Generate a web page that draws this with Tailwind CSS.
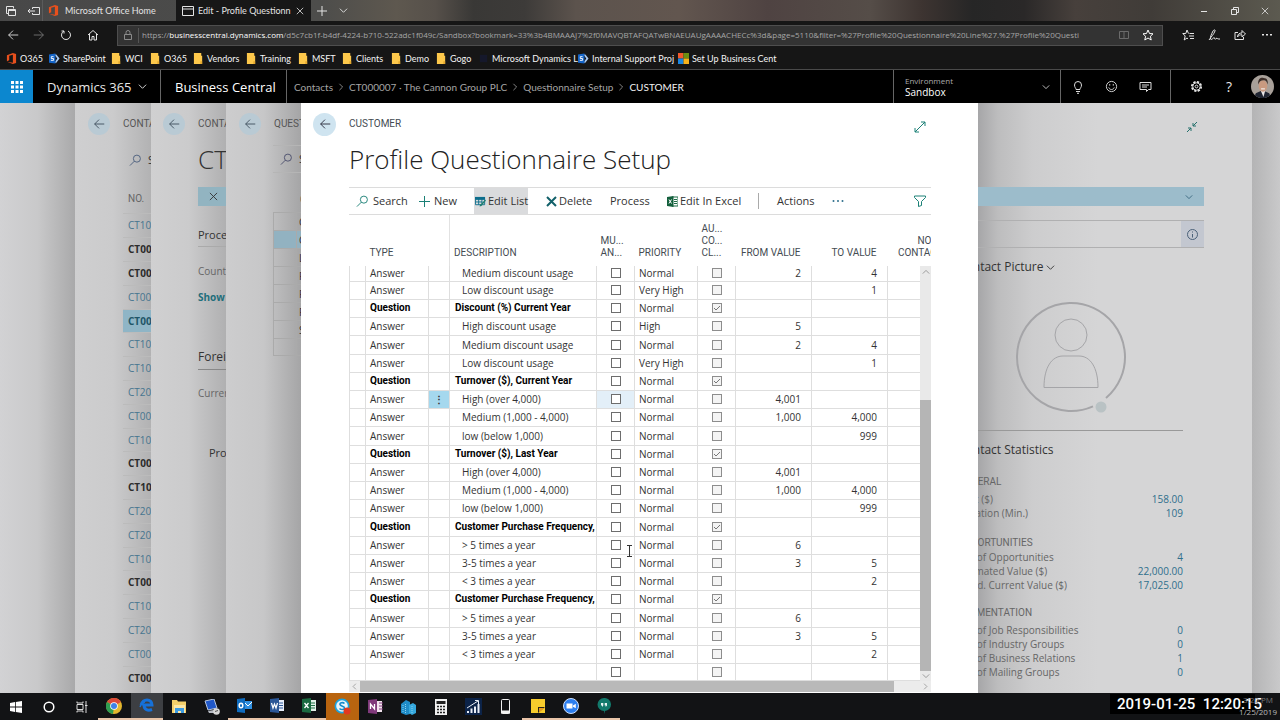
<!DOCTYPE html>
<html lang="en">
<head>
<meta charset="utf-8">
<meta name="viewport" content="width=device-width, initial-scale=1">
<title>Edit - Profile Questionnaire Setup</title>
<script src="https://cdn.jsdelivr.net/npm/@tailwindcss/browser@4"></script>
</head>
<body class="bg-black font-['Open_Sans','Noto_Sans',sans-serif] text-[10px] leading-[14px] text-[#333]">
<svg class="hidden" aria-hidden="true">
  <symbol id="back" viewBox="0 0 16 16"><path d="M14 8H3M8 3L3 8l5 5" fill="none" stroke="currentColor"/></symbol>
  <symbol id="down" viewBox="0 0 10 10"><path d="M1 3l4 4 4-4" fill="none" stroke="currentColor"/></symbol>
  <symbol id="right" viewBox="0 0 10 10"><path d="M3 1l4 4-4 4" fill="none" stroke="currentColor"/></symbol>
  <symbol id="search" viewBox="0 0 14 14"><circle cx="8.500" cy="5" r="3.800" fill="none" stroke="currentColor"/><path d="M5.800 7.700L1 12.500" fill="none" stroke="currentColor"/></symbol>
  <symbol id="cross" viewBox="0 0 10 10"><path d="M1 1l8 8M9 1L1 9" fill="none" stroke="currentColor"/></symbol>
  <symbol id="folder" viewBox="0 0 10 12"><path d="M0 0h8v3h1v9H0z" fill="#fdc84b"/><path d="M7 9h2v3H7z" fill="#e5a82e"/></symbol>
  <symbol id="office" viewBox="0 0 12 12"><path d="M1 2.500L7.500 0 11 1v10l-3.500 1L1 9.500l6.500 1V2L3.500 3v5L1 9z" fill="#e8501d"/></symbol>
  <symbol id="sharepoint" viewBox="0 0 12 12"><path d="M6 1.500h2L11.500 6 8 10.500H6l3-4.500z" fill="#a9c9f2"/><path d="M0 1.500L7 .5v11l-7-1z" fill="#1565c8"/><path d="M5 4H2.500v2H5v2H2" fill="none" stroke="#fff"/></symbol>
  <symbol id="ms" viewBox="0 0 12 12"><path d="M0 0h6v6H0z" fill="#f0592b"/><path d="M6 0h6v6H6z" fill="#6b8e12"/><path d="M0 6h6v6H0z" fill="#1a86e0"/><path d="M6 6h6v6H6z" fill="#f6b21b"/></symbol>
  <symbol id="dyn" viewBox="0 0 12 12"><path d="M2 2h8v8H2z" fill="#15182b"/></symbol>
</svg>

<div class="flex min-h-screen flex-col overflow-hidden">
  <!-- browser tabs -->
  <div class="flex h-[21px] items-stretch bg-[linear-gradient(90deg,#484848_0%,#4d4d4b_25%,#5e584f_31%,#56504a_34%,#393836_37%,#3d3b39_41%,#5c534d_45%,#62564f_53%,#4f4342_60%,#554d48_68%,#3d3431_72%,#262626_76%,#2a2828_80%,#47403c_84%,#403c38_90%,#5c5a50_100%)] font-['Lato','Open_Sans',sans-serif] text-[9px] text-[#e4e4e4]">
    <div class="flex w-[43px] items-center gap-3 border-r border-[#5b5b5b] pl-[6px]">
      <button aria-label="Tabs set aside"><svg class="size-[10px]" viewBox="0 0 10 10" fill="none" stroke="currentColor"><path d="M2.500 7.500h-2v-7h7v2"/><path d="M2.500 3.500h7v6h-7z"/><path d="M2.500 4.500h7"/></svg></button>
      <button aria-label="Set these tabs aside"><svg class="h-[10px] w-[12px]" viewBox="0 0 12 10" fill="none" stroke="currentColor"><path d="M4.500 3V1.500h7v7h-7V7M0 5h7M2 3L0 5l2 2"/></svg></button>
    </div>
    <button class="flex w-[133px] items-center gap-[6px] pl-[5px] text-left"><svg class="size-[11px] shrink-0"><use href="#office"/></svg><span class="whitespace-nowrap">Microsoft Office Home</span></button>
    <div class="flex w-[135px] items-center bg-[#171717] pl-[6px]">
      <button class="flex min-w-0 flex-1 items-center gap-[4px]"><svg class="h-[10px] w-[12px] shrink-0" viewBox="0 0 12 10" fill="none" stroke="currentColor"><path d="M.5.5h11v9H.5zM.5 3h11"/></svg><span class="whitespace-nowrap">Edit - Profile Questionn</span></button>
      <button class="flex w-[22px] justify-center" aria-label="Close tab"><svg class="size-2"><use href="#cross"/></svg></button>
    </div>
    <button class="flex w-[22px] items-center justify-center" aria-label="New tab"><svg class="size-[10px]" viewBox="0 0 10 10" stroke="currentColor"><path d="M5 0v10M0 5h10"/></svg></button>
    <button class="flex w-[20px] items-center justify-center" aria-label="Tab previews"><svg class="size-[9px]"><use href="#down"/></svg></button>
    <div class="ml-auto flex items-center">
      <button class="flex w-[30px] justify-center" aria-label="Minimize"><svg class="size-2" viewBox="0 0 8 8" stroke="currentColor"><path d="M1 4.500h6"/></svg></button>
      <button class="flex w-[31px] justify-center" aria-label="Restore"><svg class="size-2" viewBox="0 0 8 8" fill="none" stroke="currentColor"><path d="M.5 2.500h5v5h-5zM2.500 2.500v-2h5v5h-2"/></svg></button>
      <button class="flex w-[30px] justify-center" aria-label="Close"><svg class="size-2"><use href="#cross"/></svg></button>
    </div>
  </div>

  <!-- address bar -->
  <div class="flex h-[27px] items-center bg-[#161616] pt-[1px] text-[#e4e4e4]">
    <button class="flex w-[26px] justify-center" aria-label="Back"><svg class="size-[14px]"><use href="#back"/></svg></button>
    <button class="flex w-[26px] rotate-180 justify-center text-[#777]" aria-label="Forward"><svg class="size-[14px]"><use href="#back"/></svg></button>
    <button class="flex w-[28px] justify-center" aria-label="Refresh"><svg class="size-3" viewBox="0 0 12 12" fill="none" stroke="currentColor"><path d="M4 2a4.500 4.500 0 1 0 4 0M4 2H1.500M4 2v2.500"/></svg></button>
    <button class="flex w-[26px] justify-center" aria-label="Home"><svg class="size-3" viewBox="0 0 12 12" fill="none" stroke="currentColor"><path d="M1 6l5-4.500L11 6M2.500 5v6h2.500V7.500h2V11h2.500V5"/></svg></button>
    <div class="ml-[11px] flex h-[21px] min-w-0 flex-1 items-center border border-[#4e4e4e] bg-[#333]">
      <svg class="ml-[6px] h-[10px] w-2 shrink-0 text-[#8b8b8b]" viewBox="0 0 8 10" fill="none" stroke="currentColor"><path d="M.5 4.500h7v5h-7zM2 4.500V2.500a2 2 0 0 1 4 0v2"/></svg>
      <div class="ml-[6px] h-[15px] border-l border-[#555]"></div>
      <div class="ml-[3px] min-w-0 flex-1 overflow-hidden text-[8px] whitespace-nowrap text-[#a6a6a6]">https://<span class="text-white">businesscentral.dynamics.com</span>/d5c7cb1f-b4df-4224-b710-522adc1f049c/Sandbox?bookmark=33%3b4BMAAAJ7%2f0MAVQBTAFQATwBNAEUAUgAAAACHECc%3d&amp;page=5110&amp;filter=%27Profile%20Questionnaire%20Line%27.%27Profile%20Questi</div>
      <button class="flex w-[22px] justify-center text-[#6b6b6b]" aria-label="Reading view"><svg class="size-[10px]" viewBox="0 0 10 10" fill="none" stroke="currentColor"><path d="M.5 1.500h9v7h-9zM5 1.500v7"/></svg></button>
      <button class="flex w-[27px] justify-center pr-[2px] text-white" aria-label="Add to favorites"><svg class="size-3" viewBox="0 0 12 12" fill="none" stroke="currentColor"><path d="M6 1l1.500 3.500 3.500.3-2.600 2.500.8 3.700L6 9l-3.200 2 .8-3.700L1 4.800l3.500-.3z"/></svg></button>
    </div>
    <div class="flex w-[117px] items-center pl-[11px]">
      <button class="flex w-[27px] justify-center" aria-label="Hub"><svg class="size-3" viewBox="0 0 12 12" fill="none" stroke="currentColor"><path d="M6.500 4.500L5 1 3.800 4.500H.8L3.200 7l-1 4L5 9l1 .8M7.500 4.500H12M7 7h5M8 9.500h4"/></svg></button>
      <button class="flex w-[26px] justify-center" aria-label="Notes"><svg class="size-3" viewBox="0 0 12 12" fill="none" stroke="currentColor"><path d="M1 11c2-3 5-6 6-9 .5-1.500-1-1.500-2 0-1.500 3-3 6-2.500 8 .5 1.500 3-1 3.500-1.500s0 2 1.500 1.500L9 9c.5 1 1 1 3 1"/></svg></button>
      <button class="flex w-[26px] justify-center" aria-label="Share"><svg class="size-3" viewBox="0 0 12 12" fill="none" stroke="currentColor"><path d="M4 3.500H1v7h8.500V8M3.500 8c0-3 2-4 4.500-4V1.500L11.500 5 8 8V5.800C6 5.800 4.500 6 3.500 8z"/></svg></button>
      <button class="flex w-[27px] justify-center" aria-label="More"><svg class="h-1 w-3" viewBox="0 0 12 4" fill="currentColor"><path d="M1 1h2v1.500H1zM5 1h2v1.500H5zM9 1h2v1.500H9z"/></svg></button>
    </div>
  </div>

  <nav id="bookmarks" class="flex h-[22px] items-center border-b border-[#4a4a4a] bg-[#161616] pl-[6px] font-['Lato','Open_Sans',sans-serif] text-[9px] text-[#f4f4f4]" aria-label="Favorites"></nav>

  <!-- application header -->
  <header class="flex h-[33px] items-stretch bg-black text-[#e8e8e8]">
    <button class="flex w-[33px] items-center justify-center bg-[#0c87cf] text-white" aria-label="App launcher"><svg class="size-3" viewBox="0 0 12 12" fill="currentColor"><path d="M0 0h3v3H0zM4.500 0h3v3h-3zM9 0h3v3H9zM0 4.500h3v3H0zM4.500 4.500h3v3h-3zM9 4.500h3v3H9zM0 9h3v3H0zM4.500 9h3v3h-3zM9 9h3v3H9z"/></svg></button>
    <button class="flex w-[128px] items-center gap-[6px] border-r border-[#666] pl-[14px] text-[13px]"><span class="whitespace-nowrap">Dynamics 365</span><svg class="size-[9px]"><use href="#down"/></svg></button>
    <a href="#" class="flex w-[126px] items-center border-r border-[#666] pl-[14px] text-[13px] whitespace-nowrap text-white">Business Central</a>
    <nav class="flex flex-1 items-center gap-[4px] pl-[7px] font-['Lato','Open_Sans',sans-serif] text-[10px] whitespace-nowrap text-[#a5a5a5]" aria-label="Breadcrumb">
      <a href="#">Contacts</a><svg class="size-[8px]"><use href="#right"/></svg>
      <a href="#">CT000007 · The Cannon Group PLC</a><svg class="size-[8px]"><use href="#right"/></svg>
      <a href="#">Questionnaire Setup</a><svg class="size-[8px]"><use href="#right"/></svg>
      <span class="text-[#f2f2f2]">CUSTOMER</span>
    </nav>
    <button class="flex w-[168px] items-center border-x border-[#666] pr-[10px] pl-[11px] text-left">
      <span class="flex-1"><span class="block text-[8px] leading-[11px] text-[#aaa]">Environment</span><span class="block text-[10px] leading-[12px] text-white">Sandbox</span></span>
      <svg class="size-2"><use href="#down"/></svg>
    </button>
    <div class="flex w-[110px] items-center border-r border-[#666] text-[#ddd]">
      <button class="flex w-[34px] justify-center" aria-label="Tell me"><svg class="size-[14px]" viewBox="0 0 14 14" fill="none" stroke="currentColor"><path d="M5 9.500C5 8 3.500 7.500 3.500 5a3.500 3.500 0 0 1 7 0c0 2.500-1.500 3-1.500 4.500zM5 11.500h4M6 13.300h2"/></svg></button>
      <button class="flex w-[33px] justify-center" aria-label="Feedback"><svg class="size-[13px]" viewBox="0 0 14 14" fill="none" stroke="currentColor"><circle cx="7" cy="7" r="5.500"/><path d="M4 8c1 3 5 3 6 0"/><path d="M5 4.500V6M9 4.500V6" stroke-width="1.300"/></svg></button>
      <button class="flex w-[34px] justify-center" aria-label="Messages"><svg class="h-3 w-[13px]" viewBox="0 0 13 12" fill="none" stroke="currentColor"><path d="M1 1.500h11v7H9.500l-2 2v-2H1z"/><path d="M3 4h7M3 6h5" /></svg></button>
    </div>
    <div class="flex w-[109px] items-center pl-[9px]">
      <button class="flex w-[32px] justify-center" aria-label="Settings"><svg class="size-[13px]" viewBox="0 0 14 14" fill="none" stroke="currentColor"><circle cx="7" cy="7" r="5" stroke-width="2" stroke-dasharray="2.400 1.500"/><circle cx="7" cy="7" r="4"/><circle cx="7" cy="7" r="1.500"/></svg></button>
      <button class="w-[34px] text-center text-[14px]" aria-label="Help">?</button>
      <button class="flex w-[32px] justify-center" aria-label="Account"><svg class="size-[23px]" viewBox="0 0 24 24"><clipPath id="av"><circle cx="12" cy="12" r="12"/></clipPath><g clip-path="url(#av)"><path d="M0 0h24v24H0z" fill="#a8a099"/><path d="M3 24l2-5 7-3 7 3 2 5z" fill="#202532"/><path d="M10 16h5l-2 7z" fill="#e9e6e6"/><ellipse cx="12.500" cy="11.500" rx="4.500" ry="6" fill="#c99a80"/><path d="M7.500 10C7 4 10 2.500 13 3c4 0 5 3 4.300 7-1-3.500-1.500-4.500-4.300-4.500S8.500 7 7.500 10z" fill="#3b2c26"/><path d="M10.500 14.500h4" stroke="#fff"/></g></svg></button>
    </div>
  </header>

  <!-- stacked pages -->
  <div class="flex flex-1 items-stretch bg-[#cfcfd0]">
    <div class="w-[75px] shrink-0 bg-linear-to-r from-[#d2d2d4] via-[#c9c9ca] to-[#a9a9aa]"></div>

    <aside class="w-[76px] shrink-0 overflow-hidden bg-linear-to-r from-[#cfcfd0] via-[#cbcbcc] to-[#b2b2b3] whitespace-nowrap" aria-label="Contacts">
      <div class="flex h-[42px] items-center gap-[13px] pl-[13px]"><button class="flex size-[22px] shrink-0 items-center justify-center rounded-full bg-[#b9cad4] text-[#3a4a58]" aria-label="Back"><svg class="size-[14px]"><use href="#back"/></svg></button><span class="font-['Roboto',sans-serif] text-[#555]">CONTACTS</span></div>
      <div class="flex h-[30px] items-center gap-[6px] pl-[54px] text-[11px]"><svg class="size-[13px] shrink-0 text-[#4c5f7d]"><use href="#search"/></svg>Search</div>
      <div class="flex h-[38px] items-end pb-[7px] pl-[53px] font-['Roboto',sans-serif] text-[#666]">NO.</div>
      <ul id="contacts" class="pl-[48px]"></ul>
    </aside>

    <aside class="w-[75px] shrink-0 overflow-hidden bg-linear-to-r from-[#d0d0d1] via-[#cbcbcc] to-[#b0b0b1] whitespace-nowrap" aria-label="Contact card">
      <div class="flex h-[42px] items-center gap-[13px] pl-[12px]"><button class="flex size-[22px] shrink-0 items-center justify-center rounded-full bg-[#b9cad4] text-[#3a4a58]" aria-label="Back"><svg class="size-[14px]"><use href="#back"/></svg></button><span class="font-['Roboto',sans-serif] text-[#555]">CONTACT CARD</span></div>
      <div class="pl-[47px]">
        <div class="flex h-[42px] items-start text-[26px] leading-[28px] font-light">CT000007</div>
        <div class="flex h-[19px] items-center gap-[9px] bg-[#92b4c1] pl-[11px]"><svg class="size-[9px] shrink-0"><use href="#cross"/></svg>Information</div>
        <div class="flex h-[41px] items-end border-b border-[#aaa] pb-[4px] text-[11px]">Process</div>
        <div class="flex h-[37px] items-end pb-[6px] text-[#666]">Country/Region</div>
        <a href="#" class="flex h-[26px] items-center font-bold text-[#1f6e7b]">Show more</a>
        <h2 class="flex h-[60px] items-end border-b border-[#888] pb-[5px] text-[12px]">Foreign Trade</h2>
        <div class="flex h-[46px] items-center text-[#666]">Currency Code</div>
        <div class="flex h-[74px] items-center pl-[11px] text-[11px]">Profile</div>
      </div>
    </aside>

    <aside class="w-[75px] shrink-0 overflow-hidden bg-linear-to-r from-[#cdcdce] via-[#c7c7c8] to-[#a5a5a6] whitespace-nowrap" aria-label="Questionnaire Setup">
      <div class="flex h-[42px] items-center gap-[13px] pl-[13px]"><button class="flex size-[22px] shrink-0 items-center justify-center rounded-full bg-[#b9cad4] text-[#3a4a58]" aria-label="Back"><svg class="size-[14px]"><use href="#back"/></svg></button><span class="font-['Roboto',sans-serif] text-[#555]">QUESTIONNAIRE</span></div>
      <div class="ml-[47px] flex h-[28px] items-center gap-[6px] border-y border-[#b5b5b5] pl-[7px] text-[11px]"><svg class="size-[13px] shrink-0 text-[#4c4f6d]"><use href="#search"/></svg>Search</div>
      <div class="h-[39px] pt-[20px] pl-[74px] font-['Roboto',sans-serif] text-[#555]">CODE</div>
      <ul id="setups" class="ml-[47px] border-l border-[#aaa]"></ul>
    </aside>

    <main class="min-w-0 flex-1 bg-white pr-[47px] pl-[12px]">
      <div class="flex h-[42px] items-center">
        <button class="flex size-[23px] shrink-0 items-center justify-center rounded-full bg-[#cfe4f0] text-[#223]" aria-label="Back"><svg class="size-[14px]"><use href="#back"/></svg></button>
        <span class="ml-[13px] flex-1 font-['Roboto',sans-serif] text-[#444b52]">CUSTOMER</span>
        <button class="mt-[5px] mr-[5px] text-[#1b8076]" aria-label="Expand"><svg class="size-3" viewBox="0 0 12 12" fill="none" stroke="currentColor"><path d="M1 11L11 1M7 1h4v4M1 7v4h4"/></svg></button>
      </div>
      <div class="pl-[36px]">
        <h1 class="text-[26px] leading-[28px] font-light whitespace-nowrap text-[#222]">Profile Questionnaire Setup</h1>
        <div class="mt-[14px] flex h-[28px] items-center border-y border-[#dcdcdc] text-[11px] whitespace-nowrap text-[#333]" role="toolbar">
          <button class="flex w-[70px] items-center gap-[4px] pl-[7px]"><svg class="size-[13px] text-[#1b8076]"><use href="#search"/></svg>Search</button>
          <button class="flex w-[55px] items-center gap-[4px]"><svg class="size-[11px] text-[#1b8076]" viewBox="0 0 11 11" stroke="currentColor"><path d="M5.500 0v11M0 5.500h11"/></svg>New</button>
          <button class="flex h-full w-[54px] items-center gap-[2px] bg-[#dadbdd] pl-[1px]"><svg class="size-[11px] shrink-0" viewBox="0 0 12 12"><path d="M0 1h11v3H0z" fill="#0d6e8c"/><path d="M.5 3.500h10v6H.5zM.5 6.500H8M4 3v6.500M7.500 3v5" fill="none" stroke="#0d6e8c"/><path d="M11 4l1 1-5 6-2 .5.500-2z" fill="#1f7f70"/></svg>Edit List</button>
          <button class="ml-[18px] flex w-[47px] items-center gap-[2px]"><svg class="size-[11px] shrink-0 text-[#12606a]" viewBox="0 0 11 11" stroke="currentColor" stroke-width="2"><path d="M1 1l9 9M10 1L1 10"/></svg>Delete</button>
          <button class="ml-[17px] w-[40px] text-left">Process</button>
          <button class="ml-[17px] flex w-[77px] items-center gap-[2px]"><svg class="size-[11px] shrink-0" viewBox="0 0 11 11"><path d="M5 1h6v9H5z" fill="#fff" stroke="#1c6b46"/><path d="M7 3.500h3M7 5.500h3M7 7.500h3" stroke="#1c6b46"/><path d="M0 1l6.500-1v11L0 10z" fill="#14603d"/><path d="M2 3.500l2.500 4M4.500 3.500L2 7.500" stroke="#fff"/></svg>Edit In Excel</button>
          <div class="ml-[14px] h-4 border-l border-[#aaa]"></div>
          <button class="ml-[18px] w-[37px] text-left">Actions</button>
          <button class="ml-[18px] text-[#2f6f8c]" aria-label="More options"><svg class="h-1 w-3" viewBox="0 0 12 4" fill="currentColor"><circle cx="1.500" cy="2" r="1"/><circle cx="6" cy="2" r="1"/><circle cx="10.500" cy="2" r="1"/></svg></button>
          <button class="mr-[5px] ml-auto text-[#1b8076]" aria-label="Filter"><svg class="size-3" viewBox="0 0 12 12" fill="none" stroke="currentColor"><path d="M.5 1h11v1.500L7.500 6.500v4l-3 1v-5l-4-4z"/></svg></button>
        </div>
        <div class="relative overflow-hidden">
          <table class="w-[calc(100%+22px)] table-fixed border-collapse">
            <colgroup><col class="w-[16px]"><col class="w-[63px]"><col class="w-[21px]"><col><col class="w-[38px]"><col class="w-[63px]"><col class="w-[38px]"><col class="w-[76px]"><col class="w-[76px]"><col class="w-[65px]"></colgroup>
            <thead class="font-['Roboto',sans-serif] leading-[12px] text-[#444b52]">
              <tr class="h-[51px] text-left align-bottom">
                <th></th><th class="pb-[7px] pl-[4px] font-normal">TYPE</th><th></th>
                <th class="border-l border-[#e2e2e2] pb-[7px] pl-[4px] font-normal">DESCRIPTION</th>
                <th class="pb-[7px] pl-[4px] font-normal">MU...<br>AN...</th>
                <th class="pb-[7px] pl-[4px] font-normal">PRIORITY</th>
                <th class="pb-[7px] pl-[4px] font-normal">AU...<br>CO...<br>CL...</th>
                <th class="pr-[11px] pb-[7px] text-right font-normal whitespace-nowrap">FROM VALUE</th>
                <th class="pr-[11px] pb-[7px] text-right font-normal whitespace-nowrap">TO VALUE</th>
                <th class="pr-[4px] pb-[7px] text-right font-normal whitespace-nowrap">NO. OF<br>CONTACTS</th>
              </tr>
            </thead>
            <tbody id="lines" class="leading-[12px]"></tbody>
          </table>
          <!-- vertical scrollbar over the right edge of the list -->
          <div class="absolute top-[51px] right-0 bottom-0 flex w-[11px] flex-col items-center bg-[#e9e9e9] text-[#888]">
            <svg class="my-[2px] size-2 rotate-180"><use href="#down"/></svg>
            <div class="mt-[122px] w-full flex-1 bg-[#b5b5b5]"></div>
            <svg class="my-[1px] size-2"><use href="#down"/></svg>
          </div>
          <!-- text cursor -->
          <svg class="absolute top-[330px] left-[277px] h-3 w-[7px]" viewBox="0 0 7 12" fill="none" stroke="#333"><path d="M1 .5h5M1 11.500h5M3.500 1v10"/></svg>
        </div>
        <div class="flex h-[11px] items-center bg-[#ececec] text-[#888]">
          <svg class="mx-[2px] size-[7px] rotate-180"><use href="#right"/></svg>
          <div class="mr-[26px] h-full flex-1 bg-[#b9b9b9]"></div>
          <svg class="mx-[2px] size-[7px]"><use href="#right"/></svg>
        </div>
      </div>
    </main>

    <aside class="w-[274px] shrink-0 overflow-hidden bg-[linear-gradient(90deg,#a6a6a8_0px,#bdbdbe_20px,#cdcdce_55px,#d5d5d6_120px,#d5d5d6_100%)] pr-[48px] whitespace-nowrap" aria-label="Contact details">
      <div class="flex h-[84px] justify-end pt-[18px] pr-[6px]"><button class="h-3 text-[#24706c]" aria-label="Collapse"><svg class="size-3" viewBox="0 0 12 12" fill="none" stroke="currentColor"><path d="M1 11l4-4M2 7h3v3M11 1L7 5M7 2v3h3"/></svg></button></div>
      <div class="flex h-[19px] items-center justify-end bg-[#9cbccb] pr-[11px] text-[#2c5b74]"><svg class="size-2"><use href="#down"/></svg></div>
      <div class="mt-[14px] flex h-[28px] justify-end border-y border-[#b0b0b1]"><button class="flex w-[23px] items-center justify-center bg-[#c3c7d0] text-[#4a6078]" aria-label="Details"><svg class="size-[11px]" viewBox="0 0 11 11" fill="none" stroke="currentColor"><circle cx="5.500" cy="5.500" r="5"/><path d="M5.500 5v3.500M5.500 2.500v1"/></svg></button></div>
      <div class="mr-[21px] -ml-[20px]">
        <h2 class="flex h-[38px] items-center gap-[2px] text-[12px] text-[#333]">Contact Picture<svg class="size-[9px]"><use href="#down"/></svg></h2>
        <div class="flex h-[145px] justify-center border-b border-[#999] pt-[15px]">
          <svg class="size-[112px]" viewBox="0 0 112 112" fill="none" stroke="#a5a5a8"><path d="M78 105.300A54 54 0 1 1 91 97.100" stroke-width="2"/><circle cx="56" cy="34" r="16"/><path d="M29 86.500C29 66 37 55 48 55h16c11 0 19 11 19 31.500z"/><circle cx="86" cy="106" r="5.500" fill="#b9c2c4" stroke="none"/></svg>
        </div>
        <h2 class="flex h-[38px] items-center text-[12px] text-[#333]">Contact Statistics</h2>
        <div id="stats"></div>
      </div>
    </aside>
    <div class="w-[28px] shrink-0 bg-linear-to-r from-[#b4b4b5] to-[#c9c9ca]"></div>
  </div>

  <!-- taskbar -->
  <footer class="flex h-[27px] items-stretch bg-[#121315]">
    <div class="grid w-[620px] grid-cols-19">
      <button class="flex items-center justify-center" aria-label="Start"><svg class="size-3" viewBox="0 0 12 12" fill="#fff"><path d="M0 2l5-1v4.500H0zM5.800.9L12 0v5.500H5.800zM0 6.500h5V11l-5-1zM5.800 6.500H12V12l-6.200-.9z"/></svg></button>
      <button class="flex items-center justify-center" aria-label="Cortana"><svg class="size-3" viewBox="0 0 12 12" fill="none" stroke="#fff" stroke-width="1.500"><circle cx="6" cy="6" r="4.800"/></svg></button>
      <button class="flex items-center justify-center" aria-label="Task view"><svg class="size-3" viewBox="0 0 12 12" fill="none" stroke="#ddd"><path d="M1 3.500h6v5H1zM1 .5V2h6V.5M1 11.500V10h6v1.500M10 0v12M9 4.500h2.500"/></svg></button>
      <button class="flex items-center justify-center border-b-2 border-[#e9c5a9]" aria-label="Chrome"><svg class="size-4" viewBox="0 0 16 16"><circle cx="8" cy="8" r="8" fill="#e3b72e"/><path d="M8 8L1 4a8 8 0 0 1 14 0z" fill="#dc4a3a"/><path d="M8 8L1 4a8 8 0 0 0 6 12z" fill="#2f9e52"/><circle cx="8" cy="8" r="3.800" fill="#fff"/><circle cx="8" cy="8" r="3" fill="#3f82e8"/></svg></button>
      <button class="flex items-center justify-center border-b-2 border-[#e9c5a9] bg-[#3d3f43]" aria-label="Edge"><svg class="size-[15px]" viewBox="0 0 15 15" fill="none" stroke="#1671d9" stroke-width="3"><path d="M2 7c1-3 3-5 6-5s5 2 5 5H5c0 5 4 6 8 4.500"/><path d="M1 9c1-3 3-4.500 5-5" stroke-width="1.500"/></svg></button>
      <button class="flex items-center justify-center" aria-label="File Explorer"><svg class="size-[15px]" viewBox="0 0 15 15"><path d="M0 1h5l1 1.500h8V14H0z" fill="#f3cf6a"/><path d="M2 6h11v8H2z" fill="#fbe7a8"/><path d="M3 9h9v5H9v-2H6v2H3z" fill="#3d9be0"/></svg></button>
      <button class="flex items-center justify-center" aria-label="Remote Desktop"><svg class="size-4" viewBox="0 0 16 16"><path d="M1 2l9-2 3 9-9 2z" fill="#2058c9" stroke="#b8c6dd"/><path d="M4 12l6-1 1 3H5z" fill="#b8bcc4"/><circle cx="12.500" cy="12.500" r="3.300" fill="#d8d8d8"/><path d="M11 12.500l3-1" stroke="#555"/></svg></button>
      <button class="flex items-center justify-center border-b-2 border-[#e9c5a9]" aria-label="Outlook"><svg class="size-[15px]" viewBox="0 0 15 15"><path d="M7 3h8v8H7z" fill="#2f8fe0"/><path d="M8 5l3 3 4-4" stroke="#fff" fill="none"/><path d="M0 1l8-1v15l-8-1z" fill="#0f6cbf"/><ellipse cx="4" cy="7.500" rx="1.800" ry="2.300" fill="none" stroke="#fff" stroke-width="1.500"/></svg></button>
      <button class="flex items-center justify-center border-b-2 border-[#e9c5a9]" aria-label="Word"><svg class="size-[15px]" viewBox="0 0 15 15"><path d="M7 2h7v11H7z" fill="#e8eefa"/><path d="M9 5h4M9 7.500h4M9 10h4" stroke="#2b5797"/><path d="M0 1l9-1v15l-9-1z" fill="#2b5797"/><path d="M1.500 5l1.500 5 1.500-4L6 10l1.500-5" fill="none" stroke="#fff" stroke-width="1.200"/></svg></button>
      <button class="flex items-center justify-center border-b-2 border-[#e9c5a9]" aria-label="Excel"><svg class="size-[15px]" viewBox="0 0 15 15"><path d="M7 2h7v11H7z" fill="#e3f1e9"/><path d="M9 5h4M9 7.500h4M9 10h4" stroke="#1e7145"/><path d="M0 1l9-1v15l-9-1z" fill="#1b6a41"/><path d="M2.500 5l4 5M6.500 5l-4 5" stroke="#fff" stroke-width="1.300"/></svg></button>
      <button class="flex items-center justify-center bg-[#b8640f]" aria-label="Skype"><svg class="size-[17px]" viewBox="0 0 17 17"><circle cx="8" cy="8" r="7.500" fill="#1ba3de"/><circle cx="8" cy="8" r="5.800" fill="#e9f6fc"/><path d="M10.500 5.500C9 4 5.500 4.500 6 6.500S10.500 8 10.500 10 7 12 5.500 10.500" fill="none" stroke="#178ccc" stroke-width="1.600"/><circle cx="13" cy="13" r="3.500" fill="#e2391f"/></svg></button>
      <button class="flex items-center justify-center" aria-label="OneNote"><svg class="size-[15px]" viewBox="0 0 15 15"><path d="M7 2h7v11H7z" fill="#f1e3ee"/><path d="M11 4h4M11 7h4M11 10h4" stroke="#80397b"/><path d="M0 1l9-1v15l-9-1z" fill="#80397b"/><path d="M2.500 10V5L6.500 10V5" fill="none" stroke="#fff" stroke-width="1.300"/></svg></button>
      <button class="flex items-center justify-center" aria-label="Buildings"><svg class="size-4" viewBox="0 0 16 16"><path d="M1 5l5-4 4 2v12l-4 1-5-2z" fill="#1f8cc7"/><path d="M9 6l4-2 3 2v8l-4 2-3-2z" fill="#35a8dd"/><path d="M3 6v7M5.500 5v9M12 7v7" stroke="#8bd0f0" stroke-dasharray="1 1"/></svg></button>
      <button class="flex items-center justify-center" aria-label="Calculator"><svg class="h-4 w-3" viewBox="0 0 12 16"><path d="M0 0h12v16H0z" fill="#f1f1f1"/><path d="M1.500 2h9v3h-9z" fill="#222"/><path d="M2 7.500h8M2 10.500h8M2 13.500h8" stroke="#222" stroke-width="1.600" stroke-dasharray="2 1"/></svg></button>
      <button class="flex items-center justify-center" aria-label="Reports"><svg class="size-[17px]" viewBox="0 0 17 17"><path d="M0 0h17v17H0z" fill="#0c2348"/><path d="M3 13v2M6.500 10.500V15M10 8.500V15M13.500 6v9" stroke="#e9eef7" stroke-width="2"/><path d="M2 10l11-7M10 2.500h3.500V6" fill="none" stroke="#e9eef7"/></svg></button>
      <button class="flex items-center justify-center" aria-label="Phone"><svg class="h-[15px] w-[9px]" viewBox="0 0 9 15"><rect x=".5" y=".5" width="8" height="14" rx="1" fill="none" stroke="#f2f2f2"/><path d="M0 11.500h9v3H0z" fill="#f2f2f2"/></svg></button>
      <button class="flex items-center justify-center border-b-2 border-[#e9c5a9]" aria-label="Sticky Notes"><svg class="size-[14px]" viewBox="0 0 14 14"><path d="M0 0h14v14H0z" fill="#f8cc2c"/><path d="M7 14V8h7z" fill="#2a2618"/><path d="M8 13.500V9h5.500" fill="#e89b1d"/></svg></button>
      <button class="flex items-center justify-center border-b-2 border-[#e9c5a9]" aria-label="Zoom"><svg class="size-4" viewBox="0 0 16 16"><circle cx="8" cy="8" r="7.500" fill="#2d7ff0" stroke="#cfe0fb"/><path d="M3.500 5.500h6v5h-6zM10 7.500l2.800-1.700v4.400L10 8.700z" fill="#fff"/></svg></button>
      <button class="flex items-center justify-center border-b-2 border-[#e9c5a9]" aria-label="Hangouts"><svg class="size-4" viewBox="0 0 16 16"><path d="M8 0a6.500 6.500 0 0 1 1 13l-1 3v-3A6.500 6.500 0 0 1 8 0z" fill="#12796b"/><path d="M5 5h2.300v2.500L6 9V7.500H5zM8.700 5H11v2.500L9.700 9V7.500h-1z" fill="#e7f4f2"/></svg></button>
    </div>
    <div class="relative ml-auto w-[170px] pt-[1px] pr-[3px] text-right text-[8px] leading-[12px] text-[#bbb]">
      <!-- recording timestamp that shares its corner with the system clock -->
      <div class="absolute top-[1px] left-0 flex h-[20px] w-[145px] items-center bg-black pl-[7px] font-['Roboto',sans-serif] text-[15px] font-medium whitespace-pre text-white">2019-01-25  12:20:15</div>
      <div class="relative pr-[4px] text-[#777]">3:20 PM</div><div class="relative">1/25/2019</div>
    </div>
  </footer>
</div>

<script>
const bookmarks = [
  ['office','O365','w-[43px]'],['sharepoint','SharePoint','w-[62px]'],['folder','WCI','w-[39px]'],['folder','O365','w-[43px]'],
  ['folder','Vendors','w-[53px]'],['folder','Training','w-[52px]'],['folder','MSFT','w-[44px]'],['folder','Clients','w-[49px]'],
  ['folder','Demo','w-[45px]'],['folder','Gogo','w-[42px]'],['dyn','Microsoft Dynamics L','w-[100px]'],
  ['sharepoint','Internal Support Proj','w-[100px]'],['ms','Set Up Business Cent','w-[110px]']];
document.getElementById('bookmarks').innerHTML = bookmarks.map(([i,t,w]) =>
  `<a href="#" class="flex ${w} shrink-0 items-center gap-[3px]"><svg class="size-[11px] shrink-0"><use href="#${i}"/></svg><span class="whitespace-nowrap">${t}</span></a>`).join('');

const contacts = 'CT10 CT00b CT00b CT00 CT00s CT10 CT10 CT20 CT00 CT10 CT00b CT10b CT20 CT20 CT10 CT00b CT10 CT20 CT00 CT00b'.split(' ');
document.getElementById('contacts').innerHTML = contacts.map(c => {
  const k = c[4];
  const style = k === 's' ? 'bg-[#8fb5c6] font-bold text-[#1f5568]' : k === 'b' ? 'font-bold text-[#2c2c2c]' : 'text-[#46758f]';
  return `<li class="h-[24px] border-t border-[#bbb] pl-[5px] leading-[23px] nth-[5n]:h-[23px] ${style}">${c.slice(0,4)}</li>`;
}).join('');

document.getElementById('setups').innerHTML = ['COMPANY','CUSTOMER','LEADQ','PERSON','PORTF','POTENTIAL','SATISF',''].map((t,i) =>
  `<li class="flex h-[18px] items-center border-t border-[#aaa] ${i === 7 ? 'border-b' : ''} ${i === 1 ? 'bg-[#92b2c1]' : ''}"><span class="h-full w-[23px] shrink-0 border-r border-[#aaa]"></span><span class="pl-[2px]">${t}</span></li>`).join('');

const groups = [
  ['General','mb-[10px]','mb-[3px]',[['Cost ($)','158.00'],['Duration (Min.)','109']]],
  ['Opportunities','mb-[8px]','mb-0',[['No. of Opportunities','4'],['Estimated Value ($)','22,000.00'],['Calcd. Current Value ($)','17,025.00']]],
  ['Segmentation','mb-0','mb-[3px]',[['No. of Job Responsibilities','0'],['No. of Industry Groups','0'],['No. of Business Relations','1'],['No. of Mailing Groups','0']]]];
document.getElementById('stats').innerHTML = groups.map(([h,outer,inner,rows]) =>
  `<section class="${outer} pt-[6px]"><h3 class="${inner} font-['Roboto',sans-serif] text-[#666] uppercase">${h}</h3><dl>${rows.map(([a,b]) =>
  `<div class="flex justify-between"><dt class="text-[#666]">${a}</dt><dd class="text-[#2f6f8c]">${b}</dd></div>`).join('')}</dl></section>`).join('');

// kind, description, priority, auto classification, from value, to value, current
const lines = [
  ['A','Medium discount usage','Normal',0,'2','4'],['A','Low discount usage','Very High',0,'','1'],
  ['Q','Discount (%) Current Year','Normal',1,'',''],['A','High discount usage','High',0,'5',''],
  ['A','Medium discount usage','Normal',0,'2','4'],['A','Low discount usage','Very High',0,'','1'],
  ['Q','Turnover ($), Current Year','Normal',1,'',''],['A','High (over 4,000)','Normal',0,'4,001','',1],
  ['A','Medium (1,000 - 4,000)','Normal',0,'1,000','4,000'],['A','low (below 1,000)','Normal',0,'','999'],
  ['Q','Turnover ($), Last Year','Normal',1,'',''],['A','High (over 4,000)','Normal',0,'4,001',''],
  ['A','Medium (1,000 - 4,000)','Normal',0,'1,000','4,000'],['A','low (below 1,000)','Normal',0,'','999'],
  ['Q','Customer Purchase Frequency,','Normal',1,'',''],['A','&gt; 5 times a year','Normal',0,'6',''],
  ['A','3-5 times a year','Normal',0,'3','5'],['A','&lt; 3 times a year','Normal',0,'','2'],
  ['Q','Customer Purchase Frequency,','Normal',1,'',''],['A','&gt; 5 times a year','Normal',0,'6',''],
  ['A','3-5 times a year','Normal',0,'3','5'],['A','&lt; 3 times a year','Normal',0,'','2'],
  ['','','',0,'','']];
const cell = 'border border-t-0 border-[#dedede] p-0';
const box = (label, on, off) => `<span class="relative mx-auto block size-[10px]"><input type="checkbox" aria-label="${label}" ${on ? 'checked' : ''} ${off ? 'disabled' : ''} class="block size-[10px] appearance-none border ${off ? 'border-[#8d8d8d] bg-[#f4f4f4]' : 'border-[#6d6d6d] bg-white'}">${on ? '<svg class="pointer-events-none absolute inset-0 size-[10px]" viewBox="0 0 10 10" fill="none" stroke="#777"><path d="M2 5l2 2 4-4"/></svg>' : ''}</span>`;
document.getElementById('lines').innerHTML = lines.map(([k,d,p,a,f,t,cur]) => {
  const q = k === 'Q', b = q ? "font-['Roboto',sans-serif] font-bold text-black" : '';
  return `<tr class="h-[18px] first:h-[15px] last:h-[17px] nth-[5n]:h-[19px]">
  <td class="${cell}"></td><td class="${cell} ${b}"><span class="block pl-[4px]">${q ? 'Question' : k ? 'Answer' : ''}</span></td>
  <td class="${cell} ${cur ? 'bg-[#a5d8ee]' : ''} text-center font-bold">${cur ? '⋮' : ''}</td>
  <td class="${cell} ${b}"><span class="block whitespace-nowrap ${q ? 'pl-[5px]' : 'pl-[12px]'}">${d}</span></td>
  <td class="${cell} ${cur ? 'bg-[#e3eff8]' : ''}">${box('Multiple answers', 0, 0)}</td>
  <td class="${cell}"><span class="block pl-[4px]">${p}</span></td>
  <td class="${cell}">${box('Auto classification', a, 1)}</td>
  <td class="${cell} text-right"><span class="pr-[10px]">${f}</span></td>
  <td class="${cell} text-right"><span class="pr-[10px]">${t}</span></td><td class="${cell}"></td></tr>`;
}).join('');
</script>
</body>
</html>
